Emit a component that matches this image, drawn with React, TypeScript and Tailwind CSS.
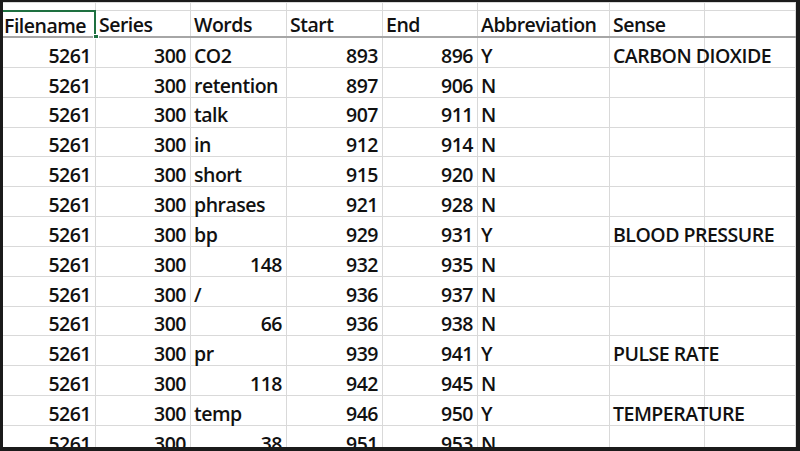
import React from 'react';

type Cell = { v: string | number; left?: boolean };

const widths = ['w-[93px]', 'w-[95px]', 'w-[96px]', 'w-[96px]', 'w-[95px]', 'w-[132px]', 'w-[95px]', 'flex-1'];

const headers = ['Filename', 'Series', 'Words', 'Start', 'End', 'Abbreviation', 'Sense', ''];

// words, start, end, abbreviation, sense
const data: [string | number, number, number, string, string][] = [
  ['CO2', 893, 896, 'Y', 'CARBON DIOXIDE'],
  ['retention', 897, 906, 'N', ''],
  ['talk', 907, 911, 'N', ''],
  ['in', 912, 914, 'N', ''],
  ['short', 915, 920, 'N', ''],
  ['phrases', 921, 928, 'N', ''],
  ['bp', 929, 931, 'Y', 'BLOOD PRESSURE'],
  [148, 932, 935, 'N', ''],
  ['/', 936, 937, 'N', ''],
  [66, 936, 938, 'N', ''],
  ['pr', 939, 941, 'Y', 'PULSE RATE'],
  [118, 942, 945, 'N', ''],
  ['temp', 946, 950, 'Y', 'TEMPERATURE'],
  [38, 951, 953, 'N', ''],
];

const Row: React.FC<{ cells: Cell[] }> = ({ cells }) => (
  <div className="flex h-[29.85px] shrink-0 border-b border-[#d9d9d9]">
    {cells.map((c, i) => (
      <div
        key={i}
        className={`${widths[i]} shrink-0 border-r border-[#d9d9d9] flex items-center pt-[6px] whitespace-nowrap overflow-visible ${
          c.left ? 'justify-start pl-[3px]' : 'justify-end pr-[4px]'
        }`}
      >
        {c.v}
      </div>
    ))}
  </div>
);

export default function App() {
  return (
    <div className="w-[800px] h-[451px] bg-[#1b1b1b] pl-[3px] pt-[2px] pr-[4px] pb-[4px]">
      <div
        className="w-full h-full bg-white overflow-hidden flex flex-col text-[#111] text-[19.5px] font-semibold tracking-[-0.5px]"
        style={{ fontFamily: '"Open Sans", "Liberation Sans", sans-serif' }}
      >
        {/* cut-off row above the header */}
        <div className="flex h-[8px] shrink-0 border-t border-[#d9d9d9]">
          {widths.map((w, i) => (
            <div key={i} className={`${w} shrink-0 border-r border-[#d9d9d9]`} />
          ))}
        </div>
        {/* header */}
        <div className="flex h-[28px] shrink-0 border-b-2 border-[#a6a6a6]">
          {headers.map((h, i) => (
            <div
              key={i}
              className={`${widths[i]} shrink-0 relative flex items-center pt-[3px] whitespace-nowrap ${
                i === 0 ? 'pl-[1px] border-t-2 border-r-2 border-[#1e7040]' : 'pl-[3px] border-t border-r border-[#d9d9d9]'
              }`}
            >
              {h}
              {i === 0 && (
                <span className="absolute right-[-5px] bottom-[-3px] w-[6px] h-[5px] bg-[#1e7040] border border-white" />
              )}
            </div>
          ))}
        </div>
        {data.map((r, i) => (
          <Row
            key={i}
            cells={[
              { v: 5261 },
              { v: 300 },
              { v: r[0], left: typeof r[0] === 'string' },
              { v: r[1] },
              { v: r[2] },
              { v: r[3], left: true },
              { v: r[4], left: true },
              { v: '', left: true },
            ]}
          />
        ))}
      </div>
    </div>
  );
}
